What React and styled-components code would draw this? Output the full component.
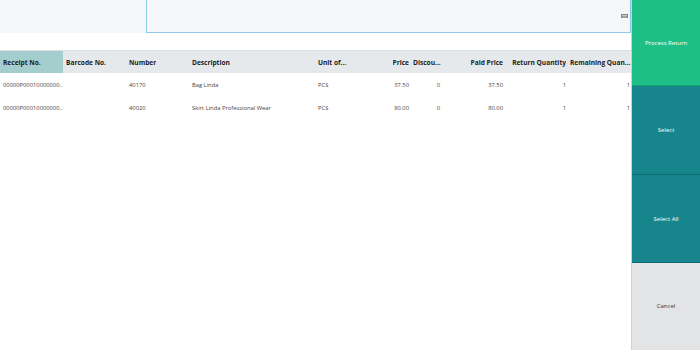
import React from 'react'
import styled, { createGlobalStyle } from 'styled-components'

const Global = createGlobalStyle`
  html, body { margin: 0; padding: 0; background: #fff; }
  body { font-family: "Open Sans", "Noto Sans", sans-serif; }
`

const columns = [
  { key: 'receipt', title: 'Receipt No.', width: 63, active: true },
  { key: 'barcode', title: 'Barcode No.', width: 63 },
  { key: 'number', title: 'Number', width: 63 },
  { key: 'desc', title: 'Description', width: 126 },
  { key: 'unit', title: 'Unit of Measure', width: 63, clip: 29 },
  { key: 'price', title: 'Price', width: 32, right: true },
  { key: 'disc', title: 'Discount', width: 31, right: true, headLeft: true },
  { key: 'paid', title: 'Paid Price', width: 63, right: true },
  { key: 'ret', title: 'Return Quantity', width: 63, right: true },
  { key: 'rem', title: 'Remaining Quantity', width: 64, right: true, headLeft: true },
]

const rows = [
  { receipt: '00000P00010000000...', barcode: '', number: '40170', desc: 'Bag Linda', unit: 'PCS', price: '37.50', disc: '0', paid: '37.50', ret: '1', rem: '1' },
  { receipt: '00000P00010000000...', barcode: '', number: '40020', desc: 'Skirt Linda Professional Wear', unit: 'PCS', price: '80.00', disc: '0', paid: '80.00', ret: '1', rem: '1' },
]

const Screen = styled.div`
  display: flex;
  width: 700px;
  height: 350px;
  overflow: hidden;
`

const Main = styled.div`
  width: 631px;
  display: flex;
  flex-direction: column;
`

const SearchBar = styled.div`
  height: 33px;
  background: #f5f6f8;
  display: flex;
  padding-left: 146px;
`

const SearchInput = styled.div`
  flex: 1;
  border: 1px solid #90c8ea;
  border-top: none;
  display: flex;
  align-items: center;
  justify-content: flex-end;
  padding-right: 2px;
`

const Table = styled.div`
  margin-top: 17px;
  border-top: 1px solid #dedfe0;
`

const HeadRow = styled.div`
  display: flex;
  height: 22px;
  background: #e5e9eb;
`

const HeadCell = styled.div`
  width: ${p => p.$w}px;
  flex: none;
  display: flex;
  align-items: center;
  justify-content: ${p => (p.$right ? 'flex-end' : 'flex-start')};
  padding: 0 ${p => (p.$right ? 1 : 0)}px 0 ${p => (p.$right ? 0 : 3)}px;
  box-sizing: border-box;
  background: ${p => (p.$active ? '#a4cece' : 'transparent')};
  font-size: 6.6px;
  font-weight: 700;
  color: #222;
  min-width: 0;
`

const HeadText = styled.span`
  display: block;
  max-width: ${p => (p.$clip ? `${p.$clip}px` : '100%')};
  white-space: nowrap;
  overflow: hidden;
  text-overflow: ellipsis;
`

const Row = styled.div`
  display: flex;
  height: 23px;
`

const Cell = styled.div`
  width: ${p => p.$w}px;
  flex: none;
  display: flex;
  align-items: center;
  justify-content: ${p => (p.$right ? 'flex-end' : 'flex-start')};
  padding: 0 ${p => (p.$right ? 1 : 0)}px 0 ${p => (p.$right ? 0 : 3)}px;
  box-sizing: border-box;
  font-size: 5.8px;
  color: #444;
  white-space: nowrap;
  overflow: hidden;
`

const Side = styled.div`
  width: 69px;
  display: flex;
  flex-direction: column;
  border-left: 1px solid #cfd0d2;
`

const Action = styled.button`
  flex: ${p => p.$size};
  border: none;
  border-bottom: 1px solid ${p => p.$line};
  background: ${p => p.$bg};
  color: ${p => p.$fg};
  font-family: "Open Sans", "Noto Sans", sans-serif;
  font-size: 6px;
  padding: 0;
  margin: 0;
  cursor: pointer;
`

function Keyboard() {
  return (
    <svg width="7" height="4" viewBox="0 0 7 4">
      <rect x="0" y="0" width="7" height="4" fill="#8a8a8a" />
      <rect x="1" y="1" width="5" height="1" fill="#c8c8c8" />
      <rect x="1.5" y="2.5" width="4" height="0.8" fill="#c8c8c8" />
    </svg>
  )
}

export default function App() {
  return (
    <Screen>
      <Global />
      <Main>
        <SearchBar>
          <SearchInput>
            <Keyboard />
          </SearchInput>
        </SearchBar>
        <Table>
          <HeadRow>
            {columns.map(c => (
              <HeadCell key={c.key} $w={c.width} $right={c.right && !c.headLeft} $active={c.active}>
                <HeadText $clip={c.clip}>{c.title}</HeadText>
              </HeadCell>
            ))}
          </HeadRow>
          {rows.map((r, i) => (
            <Row key={i}>
              {columns.map(c => (
                <Cell key={c.key} $w={c.width} $right={c.right}>
                  {r[c.key]}
                </Cell>
              ))}
            </Row>
          ))}
        </Table>
      </Main>
      <Side>
        <Action $size={86} $bg="#1ebf86" $fg="#fff" $line="#17a070">Process Return</Action>
        <Action $size={89} $bg="#17868c" $fg="#fff" $line="#116c72">Select</Action>
        <Action $size={88} $bg="#17868c" $fg="#fff" $line="#116c72">Select All</Action>
        <Action $size={87} $bg="#e3e4e6" $fg="#333" $line="#e3e4e6">Cancel</Action>
      </Side>
    </Screen>
  )
}
